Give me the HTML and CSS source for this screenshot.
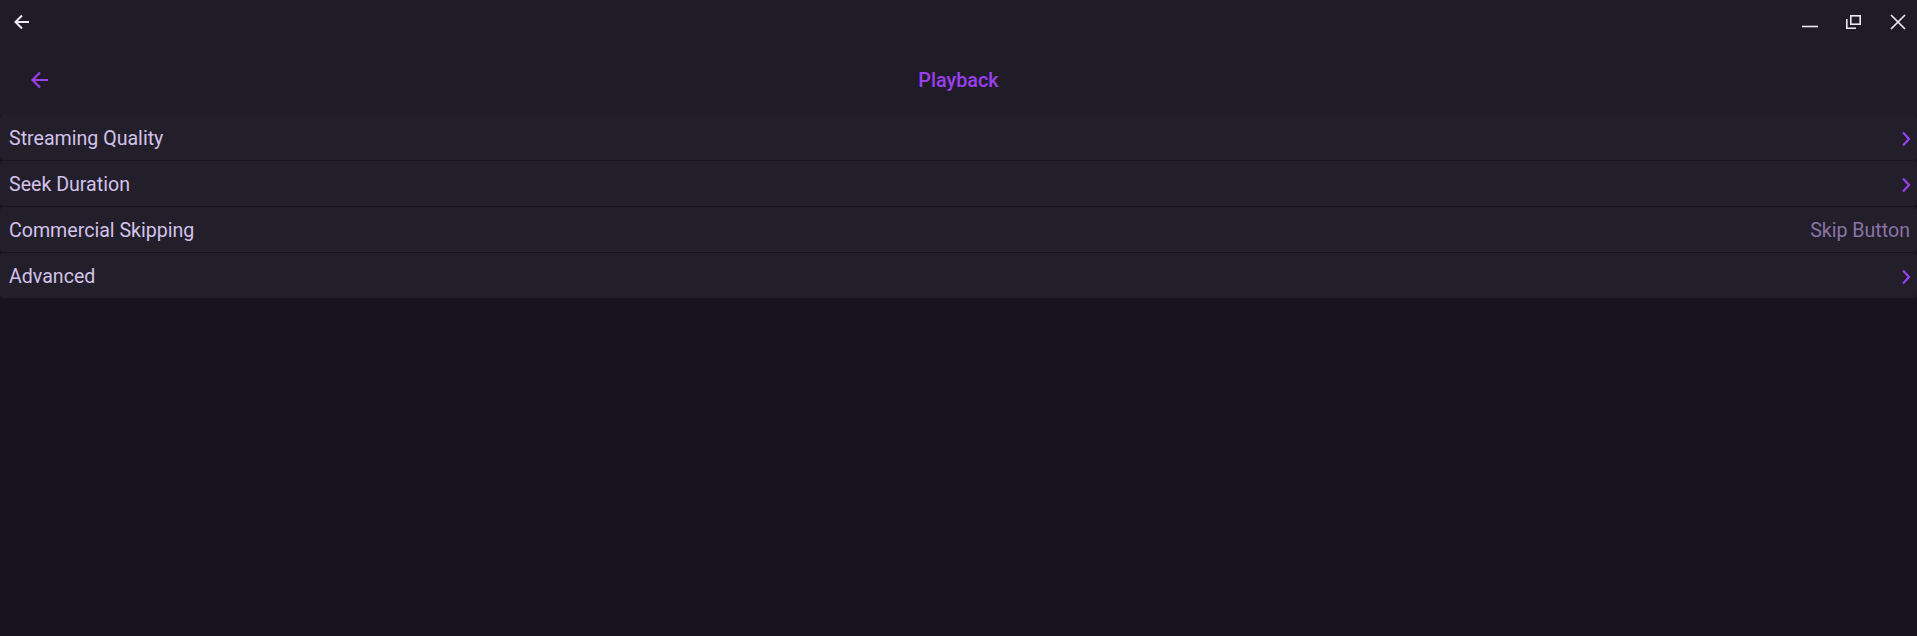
FILE: index.html
```html
<!DOCTYPE html>
<html>
<head>
<meta charset="utf-8">
<link rel="stylesheet" href="styles.css">
</head>
<body>
<div class="app">
  <div class="titlebar">
    <button class="tb-btn back">
      <svg width="18" height="18" viewBox="0 0 18 18"><path d="M16 9H3M9 2.5L2.5 9 9 15.5" fill="none" stroke="#ecebef" stroke-width="2"/></svg>
    </button>
    <div class="tb-spacer"></div>
    <div class="winctl">
      <button class="tb-btn"><svg width="18" height="18" viewBox="0 0 18 18"><path d="M1 13.5H17" stroke="#ecebef" stroke-width="1.6"/></svg></button>
      <button class="tb-btn"><svg width="18" height="18" viewBox="0 0 18 18"><path d="M1.8 6V15.2H11" fill="none" stroke="#ecebef" stroke-width="1.6"/><rect x="5.8" y="2.8" width="9.4" height="8.4" fill="none" stroke="#ecebef" stroke-width="1.6"/></svg></button>
      <button class="tb-btn"><svg width="18" height="18" viewBox="0 0 18 18"><path d="M2 2L16 16M16 2L2 16" stroke="#ecebef" stroke-width="1.7"/></svg></button>
    </div>
  </div>
  <div class="appbar">
    <button class="nav-back">
      <svg width="20" height="20" viewBox="0 0 20 20"><path d="M18 10H3M10 2.5L2.5 10 10 17.5" fill="none" stroke="#9a3ff0" stroke-width="2.2"/></svg>
    </button>
    <h1 class="title">Playback</h1>
    <div class="nav-pad"></div>
  </div>
  <div class="list">
    <div class="row"><span class="label">Streaming Quality</span><svg class="chev" width="10" height="16" viewBox="0 0 10 16"><path d="M2 1.5L8 8 2 14.5" fill="none" stroke="#9a3ff0" stroke-width="2.2"/></svg></div>
    <div class="row"><span class="label">Seek Duration</span><svg class="chev" width="10" height="16" viewBox="0 0 10 16"><path d="M2 1.5L8 8 2 14.5" fill="none" stroke="#9a3ff0" stroke-width="2.2"/></svg></div>
    <div class="row"><span class="label">Commercial Skipping</span><span class="value">Skip Button</span></div>
    <div class="row"><span class="label">Advanced</span><svg class="chev" width="10" height="16" viewBox="0 0 10 16"><path d="M2 1.5L8 8 2 14.5" fill="none" stroke="#9a3ff0" stroke-width="2.2"/></svg></div>
  </div>
</div>
</body>
</html>
```

FILE: styles.css
```css
html, body {
  margin: 0;
  padding: 0;
  height: 100%;
  background: #19131f;
  font-family: Roboto, "Noto Sans", sans-serif;
}
.app {
  display: flex;
  flex-direction: column;
}
.titlebar {
  height: 44px;
  display: flex;
  align-items: center;
  background: #201c27;
}
.tb-btn {
  width: 44px;
  height: 44px;
  padding: 0;
  border: 0;
  background: transparent;
  display: flex;
  align-items: center;
  justify-content: center;
}
.tb-spacer { flex: 1; }
.winctl {
  display: flex;
  margin-right: -3px;
}
.appbar {
  height: 71px;
  display: flex;
  align-items: center;
  background: #201c27;
}
.nav-back {
  width: 80px;
  height: 56px;
  padding: 0;
  border: 0;
  background: transparent;
  display: flex;
  align-items: center;
  justify-content: center;
}
.nav-pad { width: 80px; }
.title {
  flex: 1;
  margin: 2px 0 0;
  text-align: center;
  font-size: 19.8px;
  font-weight: 500;
  color: #9a3ff0;
}
.list {
  display: flex;
  flex-direction: column;
  gap: 1px;
}
.row {
  height: 45px;
  display: flex;
  align-items: center;
  justify-content: space-between;
  padding: 2px 6px 0 9px;
  box-sizing: border-box;
  background: #221f2a;
  border-radius: 4px;
}
.label {
  font-size: 19.6px;
  color: #d4c2ea;
}
.value {
  font-size: 19.6px;
  color: #8a72a6;
  margin-right: 1px;
}
```
